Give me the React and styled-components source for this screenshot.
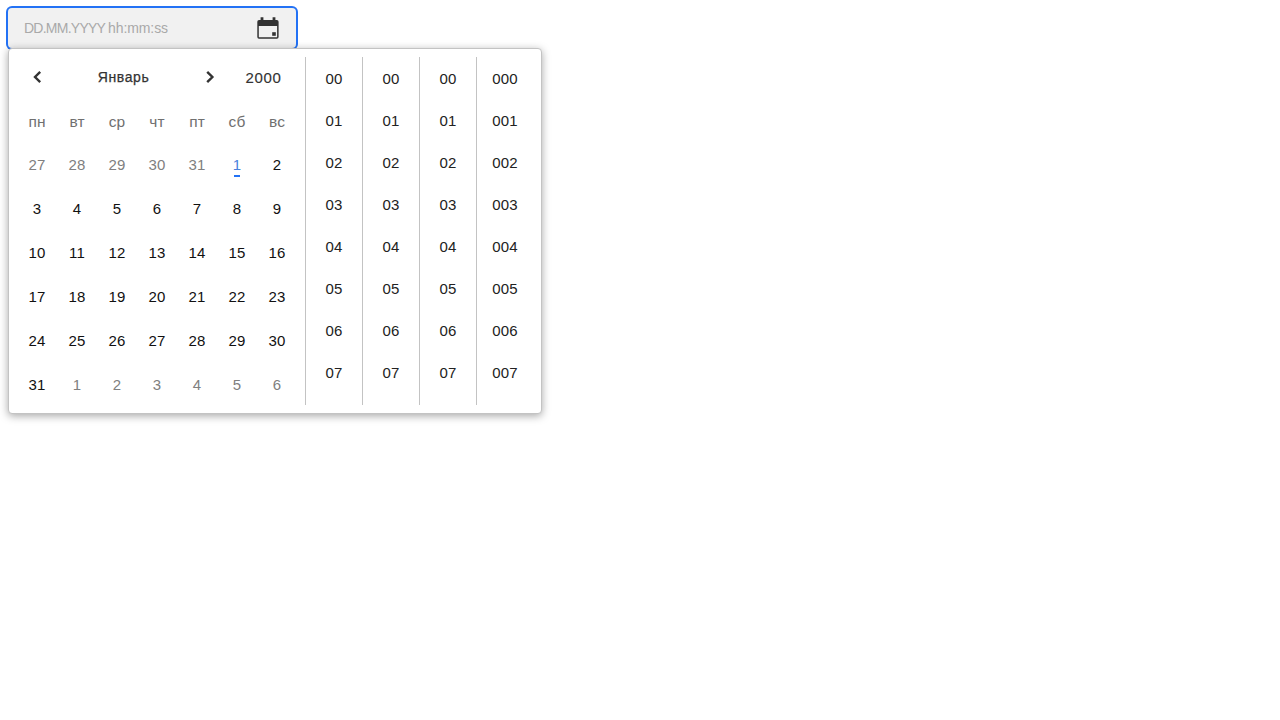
import React from 'react';
import styled, { createGlobalStyle, css } from 'styled-components';

const GlobalStyle = createGlobalStyle`
  *, *::before, *::after { box-sizing: border-box; }
  body { margin: 0; background: #fff; font-family: 'Liberation Sans', sans-serif; }
`;

const Page = styled.main`
  min-height: 100vh;
  padding: 8px;
`;

const Picker = styled.div`
  position: relative;
  width: 288px;
`;

const Field = styled.div`
  display: flex;
  align-items: center;
  justify-content: space-between;
  height: 40px;
  padding: 0 16px;
  border-radius: 4px;
  background: #f1f1f1;
  box-shadow: 0 0 0 2px #2372f5;
`;

const Placeholder = styled.span`
  font-size: 14px;
  line-height: 20px;
  letter-spacing: -0.75px;
  color: #a9a9a9;
`;

const TimePattern = styled.span`
  letter-spacing: -0.1px;
`;

const CalendarIcon = styled.svg`
  width: 24px;
  height: 24px;
  flex: none;
`;

const Popup = styled.div`
  position: absolute;
  top: 40px;
  left: 0;
  display: flex;
  width: 534px;
  height: 366px;
  padding: 8px;
  border: 1px solid #c3c3c3;
  border-radius: 4px;
  background: #fff;
  box-shadow: 0 2px 8px rgba(0, 0, 0, 0.35);
`;

const Calendar = styled.section`
  width: 280px;
  margin-right: 8px;
`;

const Header = styled.header`
  display: grid;
  grid-template-columns: 40px 133px 40px 67px;
  align-items: center;
  height: 40px;
  font-size: 14px;
  color: #333;
`;

const ArrowButton = styled.button`
  display: flex;
  align-items: center;
  justify-content: center;
  height: 40px;
  padding: 0;
  border: 0;
  background: none;
  color: #333;
`;

const Month = styled.span`
  text-align: center;
  letter-spacing: ${(p) => p.$spacing};
  -webkit-text-stroke: 0.25px currentColor;
`;

const Year = styled(Month)`
  font-size: 15px;
  -webkit-text-stroke-width: 0.15px;
`;

const Grid = styled.div`
  display: grid;
  grid-template-columns: repeat(7, 40px);
  grid-auto-rows: 44px;
  margin-top: 2px;
`;

const numerals = css`
  font-size: 15px;
  line-height: 20px;
  letter-spacing: 0.15px;
`;

const Weekday = styled.div`
  display: flex;
  align-items: center;
  justify-content: center;
  padding-top: 2px;
  font-size: 15.5px;
  letter-spacing: 0.1px;
  color: #707070;
`;

const Day = styled.div`
  ${numerals}
  position: relative;
  display: flex;
  align-items: center;
  justify-content: center;
  color: ${(p) => (p.$today ? '#4a82dc' : p.$muted ? '#808080' : '#111')};

  &::after {
    content: ${(p) => (p.$today ? "''" : 'none')};
    position: absolute;
    left: 17px;
    bottom: 10px;
    width: 6px;
    height: 2px;
    background: #2372f5;
  }
`;

const TimeColumn = styled.div`
  width: 57px;
  height: 348px;
  padding-top: 1px;
  border-left: 1px solid #c3c3c3;
`;

const TimeItem = styled.div`
  ${numerals}
  display: flex;
  align-items: center;
  justify-content: center;
  height: 42px;
  color: #222;
`;

const WEEKDAYS = ['пн', 'вт', 'ср', 'чт', 'пт', 'сб', 'вс'];

const DAYS = Array.from({ length: 42 }, (_, i) => {
  const date = new Date(2000, 0, i - 4);
  return { day: date.getDate(), outside: date.getMonth() !== 0 };
});

const DIGITS = [2, 2, 2, 3];

function Arrow({ direction }) {
  return (
    <svg width="24" height="24" viewBox="0 0 24 24" fill="none" stroke="currentColor" strokeWidth="2.4">
      <path d={direction === 'left' ? 'M15.2 6.8 10 12l5.2 5.2' : 'M9.2 6.8 14.4 12l-5.2 5.2'} />
    </svg>
  );
}

export default function App() {
  return (
    <Page>
      <GlobalStyle />
      <Picker>
        <Field>
          <Placeholder>
            DD.MM.YYYY <TimePattern>hh:mm:ss</TimePattern>
          </Placeholder>
          <CalendarIcon viewBox="0 0 24 24">
            <path
              fill="#333"
              fillRule="evenodd"
              d="M4.6 1.2h2.8V4h9.2V1.2h2.8V4h1.5a1.7 1.7 0 0 1 1.7 1.7V21a1.7 1.7 0 0 1-1.7 1.7H3A1.7 1.7 0 0 1 1.3 21V5.7A1.7 1.7 0 0 1 3 4h1.6zM2.8 10v11.3h18.3V10z"
            />
            <path fill="#333" d="M16.2 16.2h3.6v3.6h-3.6z" />
          </CalendarIcon>
        </Field>
        <Popup>
          <Calendar>
            <Header>
              <ArrowButton aria-label="Предыдущий месяц"><Arrow direction="left" /></ArrowButton>
              <Month $spacing="0.6px">Январь</Month>
              <ArrowButton aria-label="Следующий месяц"><Arrow direction="right" /></ArrowButton>
              <Year $spacing="0.6px">2000</Year>
            </Header>
            <Grid>
              {WEEKDAYS.map((name) => <Weekday key={name}>{name}</Weekday>)}
              {DAYS.map(({ day, outside }, i) => (
                <Day key={i} $today={i === 5} $muted={outside}>{day}</Day>
              ))}
            </Grid>
          </Calendar>
          {DIGITS.map((digits, column) => (
            <TimeColumn key={column}>
              {Array.from({ length: 8 }, (_, i) => (
                <TimeItem key={i}>{String(i).padStart(digits, '0')}</TimeItem>
              ))}
            </TimeColumn>
          ))}
        </Popup>
      </Picker>
    </Page>
  );
}
